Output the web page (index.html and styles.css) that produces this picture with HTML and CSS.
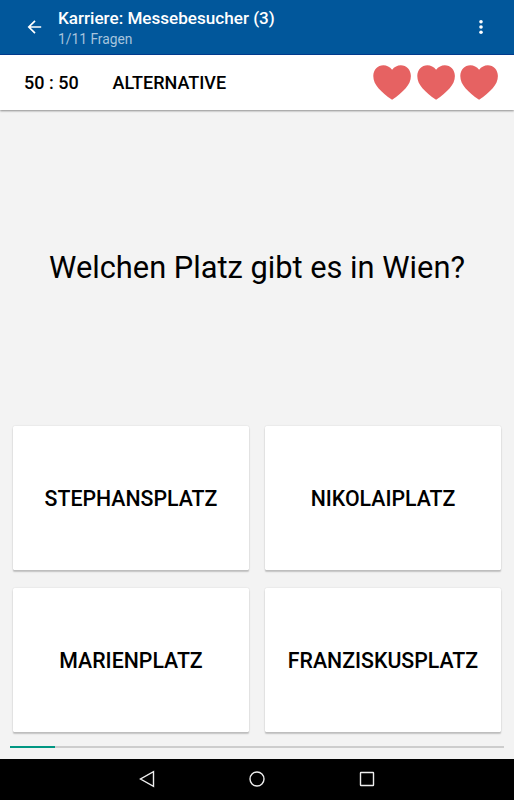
FILE: index.html
```html
<!DOCTYPE html>
<html lang="de">
<head>
<meta charset="utf-8">
<title>Karriere: Messebesucher (3)</title>
<link rel="stylesheet" href="styles.css">
</head>
<body>
<header class="appbar">
  <svg class="back" viewBox="0 0 16 16"><path d="M14.2 8H2M8 1.8 1.8 8 8 14.2"/></svg>
  <div class="titles">
    <h1 class="title">Karriere: Messebesucher (3)</h1>
    <p class="subtitle">1/11 Fragen</p>
  </div>
  <svg class="more" viewBox="0 0 6 16"><circle cx="3" cy="2.8" r="1.8"/><circle cx="3" cy="8" r="1.8"/><circle cx="3" cy="13.2" r="1.8"/></svg>
</header>
<section class="jokers">
  <span class="joker fifty">50 : 50</span>
  <span class="joker alternative">ALTERNATIVE</span>
  <div class="lives">
    <svg class="heart" viewBox="0 0 38 35"><path d="M19 4.8C16.8 1.8 13.6.2 10.3.2 4.7.2.2 4.7.2 10.9c0 9 7.500 15.700 18.800 23.900 11.300-8.200 18.800-14.900 18.800-23.900C37.800 4.700 33.300.2 27.700.2c-3.300 0-6.500 1.600-8.700 4.600z"/></svg>
    <svg class="heart" viewBox="0 0 38 35"><path d="M19 4.8C16.8 1.8 13.6.2 10.3.2 4.7.2.2 4.7.2 10.9c0 9 7.500 15.700 18.800 23.900 11.300-8.200 18.800-14.900 18.800-23.900C37.800 4.700 33.300.2 27.700.2c-3.300 0-6.500 1.600-8.700 4.600z"/></svg>
    <svg class="heart" viewBox="0 0 38 35"><path d="M19 4.8C16.8 1.8 13.6.2 10.3.2 4.7.2.2 4.7.2 10.9c0 9 7.500 15.700 18.800 23.900 11.300-8.200 18.800-14.900 18.800-23.900C37.800 4.700 33.300.2 27.700.2c-3.300 0-6.500 1.600-8.700 4.600z"/></svg>
  </div>
</section>
<main class="quiz">
  <div class="question">Welchen Platz gibt es in Wien?</div>
  <div class="answers">
    <div class="answer">STEPHANSPLATZ</div>
    <div class="answer">NIKOLAIPLATZ</div>
    <div class="answer">MARIENPLATZ</div>
    <div class="answer">FRANZISKUSPLATZ</div>
  </div>
  <div class="progress"><div class="progress-bar"></div></div>
</main>
<nav class="navbar">
  <svg class="nav-icon" viewBox="0 0 18 18"><path d="M15.500 1.700v14.600L2.500 9z"/></svg>
  <svg class="nav-icon" viewBox="0 0 18 18"><circle cx="9" cy="9" r="7"/></svg>
  <svg class="nav-icon" viewBox="0 0 18 18"><rect x="2.500" y="2.500" width="13" height="13" rx=".5"/></svg>
</nav>
</body>
</html>
```
FILE: styles.css
```css
* { box-sizing: border-box; }

body {
  margin: 0;
  width: 514px;
  height: 800px;
  display: flex;
  flex-direction: column;
  overflow: hidden;
  background: #f3f3f3;
  color: #000;
  font-family: Roboto, "Liberation Sans", sans-serif;
}

.appbar {
  height: 55px;
  display: flex;
  align-items: center;
  padding: 0 30px 0 27px;
  background: #01579b;
  border-bottom: 1px solid #003c90;
}

.back { width: 16px; height: 16px; fill: none; stroke: #fff; stroke-width: 1.7; }

.titles { flex: 1; margin-left: 15px; padding-top: 4px; }

.title, .subtitle { margin: 0; white-space: nowrap; }

.title { color: #fff; font-size: 17.1px; font-weight: 500; line-height: 20px; }

.subtitle { margin-top: 1px; color: #a7c4dd; font-size: 13.8px; line-height: 21px; }

.more { width: 6px; height: 16px; fill: #fff; }

.jokers {
  height: 55px;
  display: flex;
  align-items: center;
  padding: 0 15.500px 0 24px;
  background: #fff;
  box-shadow: 0 1px 2px rgba(0, 0, 0, .42);
}

.joker { font-size: 18px; font-weight: 500; white-space: nowrap; }

.fifty { width: 88.600px; }

.lives { display: flex; gap: 5.600px; margin: -1px 0 0 auto; }

.heart { width: 38.200px; height: 35px; fill: #e66262; }

.quiz { flex: 1; display: flex; flex-direction: column; }

.question {
  height: 316px;
  display: flex;
  align-items: center;
  justify-content: center;
  padding-bottom: 2px;
  font-size: 30.800px;
  white-space: nowrap;
}

.answers {
  display: grid;
  grid-template-columns: 236px 236px;
  grid-template-rows: 144px 144px;
  gap: 17.500px 16px;
  margin-left: 13px;
}

.answer {
  display: flex;
  align-items: center;
  justify-content: center;
  padding-top: 1px;
  background: #fff;
  border-radius: 1.500px;
  box-shadow: 0 2px 1.500px rgba(0, 0, 0, .2), 0 0 1.500px rgba(0, 0, 0, .16);
  font-size: 21.300px;
  font-weight: 500;
}

.progress { height: 2px; margin: 14.500px 10px 0; background: #cdcdcd; }

.progress-bar { width: 45px; height: 100%; background: #009682; }

.navbar {
  height: 41px;
  display: flex;
  justify-content: center;
  align-items: center;
  gap: 92px;
  padding-bottom: 1px;
  background: #000;
}

.nav-icon { width: 18px; height: 18px; fill: none; stroke: #eee; stroke-width: 1.400; }
```
